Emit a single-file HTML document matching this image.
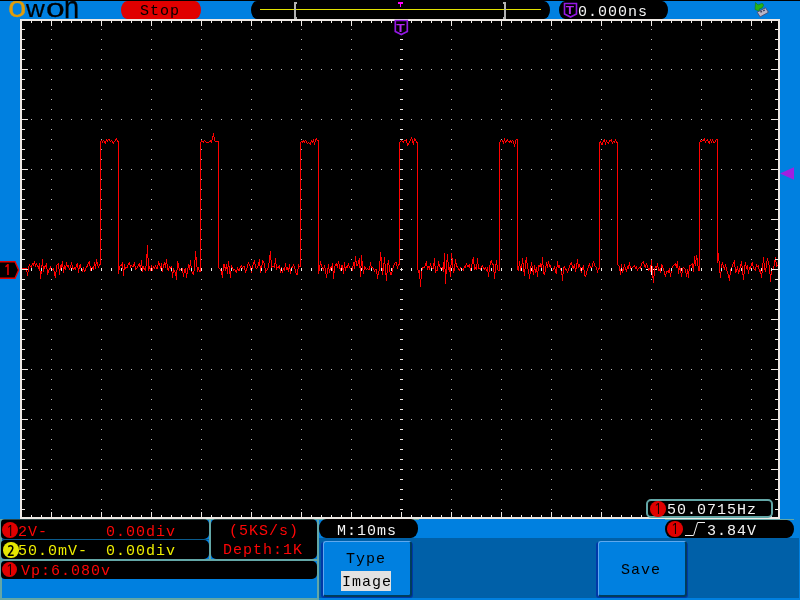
<!DOCTYPE html>
<html lang="en"><head><meta charset="utf-8"><title>OWON oscilloscope</title>
<style>
html,body{margin:0;padding:0}
body{width:800px;height:600px;overflow:hidden;background:#0080e0;position:relative;
 font-family:"Liberation Mono",monospace;font-size:15px;letter-spacing:1px;line-height:18px}
.a{position:absolute}
.blk{position:absolute;background:#000}
.t{position:absolute;white-space:pre;height:18px;will-change:transform}
.red{color:#ff0606} .yel{color:#eeee00} .wht{color:#f4f4f4}
.dot{position:absolute;width:16px;height:16px;border-radius:50%;color:#000;will-change:transform;
 font-family:"Liberation Sans","Noto Sans CJK SC",sans-serif;font-size:14px;letter-spacing:0;text-align:center;line-height:18px;text-indent:0.5px}
.dot b{font-family:"NanumGothic","Liberation Sans",sans-serif;font-weight:normal;font-size:14px}
.dot b.two{font-size:13px;font-weight:bold}
.btn{position:absolute;box-sizing:border-box;width:89px;height:56px;background:#0080e0;border-radius:3px;
 border-style:solid;border-width:1px 2px 2px 1px;border-color:#5ea8ee #003c5c #003c5c #5ea8ee;color:#000}
.nav{position:absolute;width:92px;height:56px;background:#0038a8;border-radius:3px}
</style></head><body>
<!-- top strip -->
<div class="blk" style="left:0;top:0;width:800px;height:1px"></div>
<div class="a" style="left:0;top:1px;height:18px;width:90px;font-family:'Liberation Sans',sans-serif;text-transform:lowercase;color:#000;font-size:30px;line-height:40px;letter-spacing:0;overflow:hidden;will-change:transform;-webkit-text-stroke:0.3px currentColor"><span style="position:absolute;left:7.7px;top:-12.7px;transform-origin:0 0;transform:scale(1.1,0.97);color:#e29c08">O</span><span style="position:absolute;left:25.9px;top:-8.3px;transform-origin:0 0;transform:scale(0.868,0.806)">W</span><span style="position:absolute;left:46.4px;top:-10.3px;transform-origin:0 0;transform:scale(1.12,0.881)">O</span><span style="position:absolute;left:63.98px;top:-13.58px;transform-origin:0 0;transform:scale(0.908,1.02)">N</span></div>
<div class="a" style="left:120.6px;top:1px;width:80px;height:18px;border-radius:6px/9px;background:#e00000"></div>
<div class="t" style="left:139.6px;top:3px;color:#000">Stop</div>
<div class="blk" style="left:250.6px;top:1px;width:299px;height:18px;border-radius:6px/9px"></div>
<div class="a" style="left:260px;top:9px;width:281px;height:1px;background:#e2e200"></div>
<svg class="a" style="left:290px;top:0" width="220" height="20" viewBox="290 0 220 20" shape-rendering="crispEdges">
 <path d="M294 2h3v2h-1v13h1v2h-3z" fill="#b2b2b2"/>
 <path d="M506 2h-3v2h1v13h-1v2h3z" fill="#b2b2b2"/>
 <path d="M398 2h5v2h-2v3h-1v-3h-2z" fill="#ff00ff"/>
</svg>
<div class="blk" style="left:559.4px;top:1px;width:108.6px;height:18px;border-radius:6px/9px"></div>
<svg class="a" style="left:563px;top:2px;will-change:transform" width="15" height="16" viewBox="0 0 15 16">
 <path d="M1.5 1.5H13.5V12L7.5 15L1.5 12Z" fill="#000" stroke="#9418e4" stroke-width="1.6"/>
 <text x="0" y="0" transform="translate(7.5 12.1) scale(1.28 1)" text-anchor="middle" font-family="Liberation Sans, sans-serif" font-weight="bold" font-size="10.6" fill="#b428f0">T</text>
</svg>
<div class="t wht" style="left:578.4px;top:4px">0.000ns</div>
<svg class="a" style="left:754px;top:1px" width="16" height="18" viewBox="0 0 16 18">
 <path d="M1.5 1.5L4 4L7.5 2.5Q9.5 2 9.5 4.5L8 7L5 8L6.5 10.5L1 8.5Z" fill="#28b414" stroke="#167a10" stroke-width="0.6"/>
 <path d="M3.2 11.2L11.6 6.8L14.4 11.3L6.1 15.9Z" fill="#b9b6c8" stroke="#4a4a70" stroke-width="0.9"/>
 <path d="M6 10.6L7.6 9.8L8.4 11L6.8 11.8ZM8.8 9.2L10.4 8.4L11.2 9.6L9.6 10.4Z" fill="#3c3c5a"/>
</svg>

<!-- graticule -->
<div class="a" style="left:20px;top:19px;width:760px;height:500px;background:#eee9e5"></div>
<div class="blk" style="left:22px;top:21px;width:756px;height:496px"></div>
<svg class="a" style="left:0;top:0" width="800" height="600" viewBox="0 0 800 600" shape-rendering="crispEdges">
<path d="M646 269h11v1h-11zM651 264h1v11h-1z" fill="#f4f4f4"/>
<path d="M22 268h1v1h-1zM23 268h1v1h-1zM24 268h1v1h-1zM25 268h1v1h-1zM26 268h1v4h-1zM27 272h1v4h-1zM28 266h1v6h-1zM29 264h1v2h-1zM30 266h1v1h-1zM31 265h1v3h-1zM32 263h1v2h-1zM33 263h1v3h-1zM34 261h1v3h-1zM35 264h1v3h-1zM36 263h1v2h-1zM37 265h1v2h-1zM38 266h1v3h-1zM39 263h1v8h-1zM40 271h1v8h-1zM41 265h1v9h-1zM42 259h1v7h-1zM43 266h1v6h-1zM44 266h1v3h-1zM45 265h1v2h-1zM46 263h1v6h-1zM47 269h1v6h-1zM48 270h1v3h-1zM49 268h1v2h-1zM50 266h1v3h-1zM51 269h1v2h-1zM52 269h1v1h-1zM53 268h1v3h-1zM54 271h1v5h-1zM55 272h1v6h-1zM56 265h1v7h-1zM57 264h1v1h-1zM58 263h1v6h-1zM59 269h1v6h-1zM60 265h1v5h-1zM61 264h1v4h-1zM62 261h1v6h-1zM63 267h1v6h-1zM64 265h1v4h-1zM65 266h1v4h-1zM66 262h1v4h-1zM67 265h1v2h-1zM68 265h1v3h-1zM69 268h1v2h-1zM70 265h1v3h-1zM71 262h1v3h-1zM72 265h1v4h-1zM73 268h1v2h-1zM74 267h1v2h-1zM75 267h1v3h-1zM76 264h1v3h-1zM77 263h1v5h-1zM78 268h1v5h-1zM79 265h1v4h-1zM80 264h1v4h-1zM81 268h1v3h-1zM82 269h1v3h-1zM83 267h1v3h-1zM84 270h1v2h-1zM85 268h1v3h-1zM86 266h1v2h-1zM87 264h1v3h-1zM88 262h1v2h-1zM89 261h1v5h-1zM90 266h1v5h-1zM91 269h1v2h-1zM92 267h1v2h-1zM93 266h1v4h-1zM94 262h1v4h-1zM95 264h1v5h-1zM96 259h1v5h-1zM97 262h1v4h-1zM98 266h1v2h-1zM99 264h1v2h-1zM100 141h1v124h-1zM101 139h1v2h-1zM102 141h1v2h-1zM103 140h1v1h-1zM104 141h1v2h-1zM105 141h1v3h-1zM106 139h1v2h-1zM107 140h1v2h-1zM108 139h1v1h-1zM109 139h1v2h-1zM110 141h1v1h-1zM111 140h1v1h-1zM112 141h1v2h-1zM113 142h1v2h-1zM114 141h1v1h-1zM115 139h1v2h-1zM116 138h1v2h-1zM117 140h1v2h-1zM118 141h1v133h-1zM119 266h1v4h-1zM120 265h1v1h-1zM121 264h1v2h-1zM122 262h1v7h-1zM123 269h1v7h-1zM124 264h1v6h-1zM125 267h1v2h-1zM126 267h1v1h-1zM127 265h1v3h-1zM128 263h1v2h-1zM129 262h1v3h-1zM130 265h1v3h-1zM131 265h1v1h-1zM132 266h1v1h-1zM133 264h1v3h-1zM134 262h1v4h-1zM135 266h1v4h-1zM136 268h1v1h-1zM137 266h1v2h-1zM138 264h1v2h-1zM139 263h1v4h-1zM140 265h1v5h-1zM141 260h1v6h-1zM142 266h1v6h-1zM143 266h1v3h-1zM144 268h1v2h-1zM145 266h1v5h-1zM146 254h1v12h-1zM147 245h1v13h-1zM148 258h1v13h-1zM149 266h1v3h-1zM150 268h1v3h-1zM151 265h1v3h-1zM152 268h1v3h-1zM153 266h1v2h-1zM154 267h1v2h-1zM155 265h1v2h-1zM156 267h1v2h-1zM157 265h1v4h-1zM158 261h1v4h-1zM159 263h1v3h-1zM160 266h1v3h-1zM161 263h1v5h-1zM162 268h1v4h-1zM163 264h1v4h-1zM164 262h1v3h-1zM165 263h1v5h-1zM166 259h1v5h-1zM167 264h1v6h-1zM168 268h1v3h-1zM169 266h1v2h-1zM170 267h1v2h-1zM171 266h1v6h-1zM172 272h1v6h-1zM173 268h1v5h-1zM174 270h1v2h-1zM175 272h1v4h-1zM176 270h1v10h-1zM177 261h1v9h-1zM178 263h1v5h-1zM179 268h1v3h-1zM180 269h1v1h-1zM181 269h1v2h-1zM182 268h1v5h-1zM183 273h1v4h-1zM184 269h1v4h-1zM185 268h1v5h-1zM186 273h1v5h-1zM187 268h1v6h-1zM188 264h1v4h-1zM189 265h1v5h-1zM190 260h1v6h-1zM191 266h1v6h-1zM192 272h1v2h-1zM193 271h1v4h-1zM194 260h1v11h-1zM195 251h1v9h-1zM196 257h1v10h-1zM197 267h1v5h-1zM198 267h1v3h-1zM199 270h1v2h-1zM200 142h1v130h-1zM201 140h1v2h-1zM202 141h1v1h-1zM203 141h1v2h-1zM204 140h1v1h-1zM205 141h1v1h-1zM206 142h1v1h-1zM207 142h1v1h-1zM208 142h1v1h-1zM209 141h1v1h-1zM210 140h1v2h-1zM211 140h1v3h-1zM212 136h1v4h-1zM213 133h1v4h-1zM214 137h1v4h-1zM215 141h1v1h-1zM216 141h1v1h-1zM217 141h1v1h-1zM218 141h1v127h-1zM219 268h1v1h-1zM220 269h1v2h-1zM221 271h1v4h-1zM222 271h1v7h-1zM223 264h1v7h-1zM224 264h1v4h-1zM225 267h1v4h-1zM226 264h1v5h-1zM227 267h1v7h-1zM228 261h1v6h-1zM229 266h1v8h-1zM230 271h1v7h-1zM231 265h1v6h-1zM232 267h1v2h-1zM233 269h1v2h-1zM234 269h1v1h-1zM235 270h1v2h-1zM236 270h1v3h-1zM237 267h1v3h-1zM238 269h1v2h-1zM239 268h1v3h-1zM240 266h1v2h-1zM241 265h1v2h-1zM242 267h1v2h-1zM243 266h1v1h-1zM244 266h1v4h-1zM245 270h1v3h-1zM246 268h1v3h-1zM247 264h1v4h-1zM248 262h1v2h-1zM249 264h1v2h-1zM250 266h1v4h-1zM251 269h1v4h-1zM252 265h1v4h-1zM253 262h1v3h-1zM254 260h1v4h-1zM255 264h1v4h-1zM256 268h1v1h-1zM257 266h1v2h-1zM258 262h1v4h-1zM259 259h1v7h-1zM260 266h1v7h-1zM261 265h1v6h-1zM262 260h1v5h-1zM263 261h1v2h-1zM264 263h1v5h-1zM265 268h1v5h-1zM266 270h1v1h-1zM267 268h1v2h-1zM268 263h1v5h-1zM269 255h1v8h-1zM270 251h1v9h-1zM271 260h1v9h-1zM272 266h1v1h-1zM273 266h1v1h-1zM274 263h1v5h-1zM275 258h1v6h-1zM276 264h1v6h-1zM277 267h1v1h-1zM278 266h1v2h-1zM279 265h1v4h-1zM280 269h1v4h-1zM281 267h1v3h-1zM282 270h1v3h-1zM283 268h1v2h-1zM284 267h1v4h-1zM285 263h1v4h-1zM286 267h1v3h-1zM287 267h1v3h-1zM288 268h1v4h-1zM289 264h1v5h-1zM290 269h1v5h-1zM291 267h1v3h-1zM292 266h1v2h-1zM293 264h1v2h-1zM294 266h1v3h-1zM295 269h1v4h-1zM296 273h1v2h-1zM297 269h1v6h-1zM298 264h1v5h-1zM299 266h1v1h-1zM300 142h1v125h-1zM301 141h1v1h-1zM302 141h1v2h-1zM303 140h1v2h-1zM304 141h1v2h-1zM305 140h1v1h-1zM306 141h1v2h-1zM307 143h1v1h-1zM308 142h1v1h-1zM309 143h1v1h-1zM310 142h1v3h-1zM311 140h1v2h-1zM312 141h1v2h-1zM313 139h1v3h-1zM314 142h1v3h-1zM315 139h1v3h-1zM316 138h1v2h-1zM317 140h1v1h-1zM318 140h1v134h-1zM319 265h1v6h-1zM320 261h1v4h-1zM321 264h1v3h-1zM322 267h1v2h-1zM323 268h1v3h-1zM324 265h1v3h-1zM325 268h1v6h-1zM326 274h1v4h-1zM327 268h1v6h-1zM328 264h1v5h-1zM329 269h1v4h-1zM330 267h1v3h-1zM331 266h1v4h-1zM332 263h1v8h-1zM333 271h1v8h-1zM334 266h1v7h-1zM335 264h1v2h-1zM336 263h1v3h-1zM337 264h1v4h-1zM338 261h1v3h-1zM339 264h1v5h-1zM340 268h1v3h-1zM341 265h1v3h-1zM342 265h1v5h-1zM343 268h1v6h-1zM344 262h1v6h-1zM345 267h1v4h-1zM346 266h1v2h-1zM347 265h1v3h-1zM348 263h1v3h-1zM349 266h1v2h-1zM350 268h1v1h-1zM351 269h1v1h-1zM352 266h1v5h-1zM353 262h1v4h-1zM354 262h1v7h-1zM355 256h1v6h-1zM356 261h1v5h-1zM357 264h1v2h-1zM358 260h1v4h-1zM359 258h1v10h-1zM360 266h1v11h-1zM361 255h1v11h-1zM362 261h1v9h-1zM363 270h1v4h-1zM364 266h1v4h-1zM365 267h1v2h-1zM366 269h1v1h-1zM367 268h1v1h-1zM368 269h1v1h-1zM369 266h1v4h-1zM370 262h1v4h-1zM371 266h1v3h-1zM372 267h1v1h-1zM373 268h1v2h-1zM374 270h1v2h-1zM375 269h1v1h-1zM376 269h1v5h-1zM377 274h1v5h-1zM378 271h1v4h-1zM379 261h1v10h-1zM380 252h1v9h-1zM381 257h1v11h-1zM382 268h1v7h-1zM383 263h1v8h-1zM384 257h1v7h-1zM385 264h1v11h-1zM386 273h1v8h-1zM387 263h1v10h-1zM388 260h1v5h-1zM389 265h1v7h-1zM390 272h1v3h-1zM391 272h1v3h-1zM392 268h1v4h-1zM393 265h1v3h-1zM394 263h1v2h-1zM395 262h1v1h-1zM396 262h1v4h-1zM397 266h1v3h-1zM398 264h1v2h-1zM399 142h1v123h-1zM400 141h1v1h-1zM401 140h1v1h-1zM402 141h1v1h-1zM403 141h1v2h-1zM404 140h1v1h-1zM405 140h1v1h-1zM406 139h1v4h-1zM407 143h1v3h-1zM408 143h1v2h-1zM409 141h1v2h-1zM410 139h1v2h-1zM411 137h1v2h-1zM412 139h1v4h-1zM413 141h1v4h-1zM414 138h1v3h-1zM415 139h1v2h-1zM416 141h1v2h-1zM417 142h1v128h-1zM418 270h1v3h-1zM419 270h1v9h-1zM420 279h1v8h-1zM421 270h1v9h-1zM422 267h1v3h-1zM423 267h1v1h-1zM424 266h1v2h-1zM425 263h1v3h-1zM426 261h1v5h-1zM427 266h1v4h-1zM428 266h1v2h-1zM429 266h1v4h-1zM430 263h1v3h-1zM431 266h1v3h-1zM432 268h1v1h-1zM433 263h1v6h-1zM434 258h1v8h-1zM435 266h1v7h-1zM436 270h1v1h-1zM437 266h1v5h-1zM438 261h1v5h-1zM439 264h1v3h-1zM440 267h1v2h-1zM441 269h1v2h-1zM442 267h1v3h-1zM443 262h1v10h-1zM444 253h1v16h-1zM445 269h1v15h-1zM446 260h1v14h-1zM447 254h1v8h-1zM448 262h1v8h-1zM449 267h1v5h-1zM450 265h1v12h-1zM451 253h1v12h-1zM452 258h1v10h-1zM453 268h1v5h-1zM454 264h1v7h-1zM455 259h1v5h-1zM456 263h1v4h-1zM457 266h1v2h-1zM458 268h1v2h-1zM459 269h1v2h-1zM460 267h1v2h-1zM461 268h1v1h-1zM462 269h1v1h-1zM463 268h1v3h-1zM464 266h1v2h-1zM465 265h1v3h-1zM466 263h1v2h-1zM467 265h1v2h-1zM468 265h1v2h-1zM469 264h1v4h-1zM470 268h1v3h-1zM471 264h1v4h-1zM472 259h1v5h-1zM473 257h1v7h-1zM474 264h1v6h-1zM475 267h1v2h-1zM476 264h1v6h-1zM477 258h1v6h-1zM478 264h1v5h-1zM479 268h1v1h-1zM480 268h1v2h-1zM481 266h1v2h-1zM482 265h1v2h-1zM483 267h1v2h-1zM484 268h1v2h-1zM485 267h1v2h-1zM486 269h1v2h-1zM487 267h1v5h-1zM488 272h1v5h-1zM489 265h1v7h-1zM490 261h1v4h-1zM491 260h1v3h-1zM492 263h1v2h-1zM493 264h1v8h-1zM494 272h1v7h-1zM495 264h1v9h-1zM496 260h1v5h-1zM497 265h1v5h-1zM498 270h1v1h-1zM499 142h1v129h-1zM500 140h1v2h-1zM501 139h1v1h-1zM502 140h1v2h-1zM503 141h1v3h-1zM504 138h1v3h-1zM505 141h1v2h-1zM506 140h1v2h-1zM507 139h1v2h-1zM508 141h1v1h-1zM509 141h1v2h-1zM510 140h1v2h-1zM511 141h1v2h-1zM512 140h1v1h-1zM513 141h1v3h-1zM514 144h1v3h-1zM515 140h1v4h-1zM516 139h1v1h-1zM517 139h1v131h-1zM518 266h1v5h-1zM519 261h1v5h-1zM520 266h1v5h-1zM521 264h1v6h-1zM522 258h1v6h-1zM523 263h1v9h-1zM524 269h1v7h-1zM525 260h1v9h-1zM526 257h1v6h-1zM527 263h1v6h-1zM528 269h1v5h-1zM529 274h1v5h-1zM530 266h1v8h-1zM531 262h1v4h-1zM532 266h1v6h-1zM533 270h1v5h-1zM534 265h1v5h-1zM535 269h1v4h-1zM536 267h1v5h-1zM537 271h1v6h-1zM538 265h1v6h-1zM539 265h1v2h-1zM540 263h1v4h-1zM541 264h1v7h-1zM542 257h1v8h-1zM543 265h1v9h-1zM544 272h1v3h-1zM545 266h1v6h-1zM546 262h1v4h-1zM547 264h1v4h-1zM548 261h1v3h-1zM549 264h1v3h-1zM550 265h1v3h-1zM551 268h1v3h-1zM552 270h1v1h-1zM553 268h1v2h-1zM554 266h1v3h-1zM555 269h1v4h-1zM556 267h1v7h-1zM557 261h1v6h-1zM558 265h1v3h-1zM559 265h1v3h-1zM560 268h1v2h-1zM561 269h1v6h-1zM562 274h1v7h-1zM563 267h1v7h-1zM564 266h1v2h-1zM565 268h1v2h-1zM566 269h1v2h-1zM567 271h1v2h-1zM568 268h1v3h-1zM569 265h1v3h-1zM570 263h1v2h-1zM571 262h1v3h-1zM572 265h1v3h-1zM573 266h1v3h-1zM574 264h1v4h-1zM575 268h1v4h-1zM576 263h1v6h-1zM577 259h1v5h-1zM578 264h1v4h-1zM579 264h1v3h-1zM580 267h1v4h-1zM581 270h1v3h-1zM582 267h1v3h-1zM583 265h1v5h-1zM584 270h1v6h-1zM585 275h1v2h-1zM586 271h1v4h-1zM587 268h1v3h-1zM588 265h1v3h-1zM589 263h1v3h-1zM590 266h1v2h-1zM591 267h1v2h-1zM592 263h1v4h-1zM593 261h1v2h-1zM594 263h1v3h-1zM595 266h1v1h-1zM596 267h1v3h-1zM597 270h1v3h-1zM598 268h1v2h-1zM599 142h1v127h-1zM600 141h1v2h-1zM601 143h1v2h-1zM602 142h1v3h-1zM603 140h1v2h-1zM604 139h1v3h-1zM605 142h1v3h-1zM606 140h1v2h-1zM607 142h1v1h-1zM608 142h1v2h-1zM609 140h1v2h-1zM610 140h1v1h-1zM611 139h1v3h-1zM612 142h1v2h-1zM613 141h1v1h-1zM614 141h1v2h-1zM615 139h1v2h-1zM616 141h1v2h-1zM617 142h1v123h-1zM618 265h1v1h-1zM619 266h1v5h-1zM620 269h1v6h-1zM621 264h1v5h-1zM622 269h1v4h-1zM623 267h1v4h-1zM624 264h1v3h-1zM625 267h1v3h-1zM626 269h1v3h-1zM627 266h1v3h-1zM628 265h1v4h-1zM629 262h1v4h-1zM630 266h1v3h-1zM631 268h1v1h-1zM632 267h1v1h-1zM633 266h1v1h-1zM634 265h1v2h-1zM635 267h1v2h-1zM636 266h1v3h-1zM637 269h1v2h-1zM638 268h1v1h-1zM639 267h1v1h-1zM640 266h1v3h-1zM641 263h1v3h-1zM642 262h1v1h-1zM643 261h1v3h-1zM644 264h1v3h-1zM645 265h1v3h-1zM646 263h1v2h-1zM647 265h1v3h-1zM648 268h1v3h-1zM649 268h1v2h-1zM650 265h1v7h-1zM651 259h1v7h-1zM652 266h1v12h-1zM653 276h1v7h-1zM654 268h1v8h-1zM655 266h1v2h-1zM656 266h1v3h-1zM657 263h1v4h-1zM658 267h1v4h-1zM659 269h1v2h-1zM660 268h1v5h-1zM661 264h1v4h-1zM662 265h1v3h-1zM663 268h1v3h-1zM664 271h1v4h-1zM665 274h1v3h-1zM666 271h1v3h-1zM667 271h1v1h-1zM668 270h1v3h-1zM669 268h1v5h-1zM670 273h1v4h-1zM671 268h1v5h-1zM672 266h1v2h-1zM673 265h1v1h-1zM674 264h1v1h-1zM675 263h1v3h-1zM676 264h1v4h-1zM677 261h1v7h-1zM678 268h1v6h-1zM679 266h1v4h-1zM680 268h1v5h-1zM681 273h1v4h-1zM682 268h1v5h-1zM683 267h1v1h-1zM684 268h1v1h-1zM685 269h1v4h-1zM686 273h1v4h-1zM687 269h1v5h-1zM688 271h1v7h-1zM689 265h1v6h-1zM690 265h1v1h-1zM691 264h1v1h-1zM692 263h1v5h-1zM693 264h1v8h-1zM694 256h1v8h-1zM695 260h1v6h-1zM696 255h1v5h-1zM697 258h1v8h-1zM698 266h1v5h-1zM699 142h1v129h-1zM700 140h1v2h-1zM701 141h1v1h-1zM702 140h1v1h-1zM703 139h1v2h-1zM704 138h1v3h-1zM705 141h1v2h-1zM706 140h1v1h-1zM707 139h1v2h-1zM708 141h1v2h-1zM709 141h1v3h-1zM710 139h1v2h-1zM711 141h1v2h-1zM712 139h1v2h-1zM713 141h1v2h-1zM714 142h1v1h-1zM715 140h1v2h-1zM716 139h1v1h-1zM717 139h1v124h-1zM718 253h1v8h-1zM719 261h1v12h-1zM720 272h1v6h-1zM721 264h1v8h-1zM722 262h1v3h-1zM723 265h1v3h-1zM724 267h1v3h-1zM725 264h1v3h-1zM726 267h1v4h-1zM727 271h1v3h-1zM728 274h1v4h-1zM729 275h1v6h-1zM730 269h1v6h-1zM731 267h1v2h-1zM732 264h1v3h-1zM733 262h1v2h-1zM734 260h1v7h-1zM735 267h1v6h-1zM736 269h1v3h-1zM737 266h1v4h-1zM738 270h1v4h-1zM739 268h1v4h-1zM740 264h1v4h-1zM741 261h1v5h-1zM742 266h1v9h-1zM743 274h1v6h-1zM744 265h1v9h-1zM745 262h1v4h-1zM746 266h1v3h-1zM747 265h1v5h-1zM748 270h1v4h-1zM749 267h1v3h-1zM750 266h1v3h-1zM751 263h1v3h-1zM752 262h1v4h-1zM753 266h1v3h-1zM754 269h1v1h-1zM755 267h1v4h-1zM756 264h1v3h-1zM757 266h1v1h-1zM758 265h1v4h-1zM759 269h1v3h-1zM760 270h1v4h-1zM761 273h1v5h-1zM762 263h1v10h-1zM763 257h1v6h-1zM764 263h1v7h-1zM765 268h1v4h-1zM766 261h1v7h-1zM767 258h1v3h-1zM768 261h1v4h-1zM769 265h1v9h-1zM770 274h1v8h-1zM771 269h1v6h-1zM772 269h1v1h-1zM773 266h1v3h-1zM774 260h1v6h-1zM775 257h1v5h-1zM776 262h1v5h-1zM777 265h1v1h-1z" fill="#ff0000"/>
<path d="M31 69h1v1h-1zM31 119h1v1h-1zM31 169h1v1h-1zM31 219h1v1h-1zM31 319h1v1h-1zM31 369h1v1h-1zM31 419h1v1h-1zM31 469h1v1h-1zM41 69h1v1h-1zM41 119h1v1h-1zM41 169h1v1h-1zM41 219h1v1h-1zM41 319h1v1h-1zM41 369h1v1h-1zM41 419h1v1h-1zM41 469h1v1h-1zM51 29h1v1h-1zM51 39h1v1h-1zM51 49h1v1h-1zM51 59h1v1h-1zM51 69h1v1h-1zM51 79h1v1h-1zM51 89h1v1h-1zM51 99h1v1h-1zM51 109h1v1h-1zM51 119h1v1h-1zM51 129h1v1h-1zM51 139h1v1h-1zM51 149h1v1h-1zM51 159h1v1h-1zM51 169h1v1h-1zM51 179h1v1h-1zM51 189h1v1h-1zM51 199h1v1h-1zM51 209h1v1h-1zM51 219h1v1h-1zM51 229h1v1h-1zM51 239h1v1h-1zM51 249h1v1h-1zM51 259h1v1h-1zM51 279h1v1h-1zM51 289h1v1h-1zM51 299h1v1h-1zM51 309h1v1h-1zM51 319h1v1h-1zM51 329h1v1h-1zM51 339h1v1h-1zM51 349h1v1h-1zM51 359h1v1h-1zM51 369h1v1h-1zM51 379h1v1h-1zM51 389h1v1h-1zM51 399h1v1h-1zM51 409h1v1h-1zM51 419h1v1h-1zM51 429h1v1h-1zM51 439h1v1h-1zM51 449h1v1h-1zM51 459h1v1h-1zM51 469h1v1h-1zM51 479h1v1h-1zM51 489h1v1h-1zM51 499h1v1h-1zM51 509h1v1h-1zM61 69h1v1h-1zM61 119h1v1h-1zM61 169h1v1h-1zM61 219h1v1h-1zM61 319h1v1h-1zM61 369h1v1h-1zM61 419h1v1h-1zM61 469h1v1h-1zM71 69h1v1h-1zM71 119h1v1h-1zM71 169h1v1h-1zM71 219h1v1h-1zM71 319h1v1h-1zM71 369h1v1h-1zM71 419h1v1h-1zM71 469h1v1h-1zM81 69h1v1h-1zM81 119h1v1h-1zM81 169h1v1h-1zM81 219h1v1h-1zM81 319h1v1h-1zM81 369h1v1h-1zM81 419h1v1h-1zM81 469h1v1h-1zM91 69h1v1h-1zM91 119h1v1h-1zM91 169h1v1h-1zM91 219h1v1h-1zM91 319h1v1h-1zM91 369h1v1h-1zM91 419h1v1h-1zM91 469h1v1h-1zM101 29h1v1h-1zM101 39h1v1h-1zM101 49h1v1h-1zM101 59h1v1h-1zM101 69h1v1h-1zM101 79h1v1h-1zM101 89h1v1h-1zM101 99h1v1h-1zM101 109h1v1h-1zM101 119h1v1h-1zM101 129h1v1h-1zM101 139h1v1h-1zM101 149h1v1h-1zM101 159h1v1h-1zM101 169h1v1h-1zM101 179h1v1h-1zM101 189h1v1h-1zM101 199h1v1h-1zM101 209h1v1h-1zM101 219h1v1h-1zM101 229h1v1h-1zM101 239h1v1h-1zM101 249h1v1h-1zM101 259h1v1h-1zM101 279h1v1h-1zM101 289h1v1h-1zM101 299h1v1h-1zM101 309h1v1h-1zM101 319h1v1h-1zM101 329h1v1h-1zM101 339h1v1h-1zM101 349h1v1h-1zM101 359h1v1h-1zM101 369h1v1h-1zM101 379h1v1h-1zM101 389h1v1h-1zM101 399h1v1h-1zM101 409h1v1h-1zM101 419h1v1h-1zM101 429h1v1h-1zM101 439h1v1h-1zM101 449h1v1h-1zM101 459h1v1h-1zM101 469h1v1h-1zM101 479h1v1h-1zM101 489h1v1h-1zM101 499h1v1h-1zM101 509h1v1h-1zM111 69h1v1h-1zM111 119h1v1h-1zM111 169h1v1h-1zM111 219h1v1h-1zM111 319h1v1h-1zM111 369h1v1h-1zM111 419h1v1h-1zM111 469h1v1h-1zM121 69h1v1h-1zM121 119h1v1h-1zM121 169h1v1h-1zM121 219h1v1h-1zM121 319h1v1h-1zM121 369h1v1h-1zM121 419h1v1h-1zM121 469h1v1h-1zM131 69h1v1h-1zM131 119h1v1h-1zM131 169h1v1h-1zM131 219h1v1h-1zM131 319h1v1h-1zM131 369h1v1h-1zM131 419h1v1h-1zM131 469h1v1h-1zM141 69h1v1h-1zM141 119h1v1h-1zM141 169h1v1h-1zM141 219h1v1h-1zM141 319h1v1h-1zM141 369h1v1h-1zM141 419h1v1h-1zM141 469h1v1h-1zM151 29h1v1h-1zM151 39h1v1h-1zM151 49h1v1h-1zM151 59h1v1h-1zM151 69h1v1h-1zM151 79h1v1h-1zM151 89h1v1h-1zM151 99h1v1h-1zM151 109h1v1h-1zM151 119h1v1h-1zM151 129h1v1h-1zM151 139h1v1h-1zM151 149h1v1h-1zM151 159h1v1h-1zM151 169h1v1h-1zM151 179h1v1h-1zM151 189h1v1h-1zM151 199h1v1h-1zM151 209h1v1h-1zM151 219h1v1h-1zM151 229h1v1h-1zM151 239h1v1h-1zM151 249h1v1h-1zM151 259h1v1h-1zM151 279h1v1h-1zM151 289h1v1h-1zM151 299h1v1h-1zM151 309h1v1h-1zM151 319h1v1h-1zM151 329h1v1h-1zM151 339h1v1h-1zM151 349h1v1h-1zM151 359h1v1h-1zM151 369h1v1h-1zM151 379h1v1h-1zM151 389h1v1h-1zM151 399h1v1h-1zM151 409h1v1h-1zM151 419h1v1h-1zM151 429h1v1h-1zM151 439h1v1h-1zM151 449h1v1h-1zM151 459h1v1h-1zM151 469h1v1h-1zM151 479h1v1h-1zM151 489h1v1h-1zM151 499h1v1h-1zM151 509h1v1h-1zM161 69h1v1h-1zM161 119h1v1h-1zM161 169h1v1h-1zM161 219h1v1h-1zM161 319h1v1h-1zM161 369h1v1h-1zM161 419h1v1h-1zM161 469h1v1h-1zM171 69h1v1h-1zM171 119h1v1h-1zM171 169h1v1h-1zM171 219h1v1h-1zM171 319h1v1h-1zM171 369h1v1h-1zM171 419h1v1h-1zM171 469h1v1h-1zM181 69h1v1h-1zM181 119h1v1h-1zM181 169h1v1h-1zM181 219h1v1h-1zM181 319h1v1h-1zM181 369h1v1h-1zM181 419h1v1h-1zM181 469h1v1h-1zM191 69h1v1h-1zM191 119h1v1h-1zM191 169h1v1h-1zM191 219h1v1h-1zM191 319h1v1h-1zM191 369h1v1h-1zM191 419h1v1h-1zM191 469h1v1h-1zM201 29h1v1h-1zM201 39h1v1h-1zM201 49h1v1h-1zM201 59h1v1h-1zM201 69h1v1h-1zM201 79h1v1h-1zM201 89h1v1h-1zM201 99h1v1h-1zM201 109h1v1h-1zM201 119h1v1h-1zM201 129h1v1h-1zM201 139h1v1h-1zM201 149h1v1h-1zM201 159h1v1h-1zM201 169h1v1h-1zM201 179h1v1h-1zM201 189h1v1h-1zM201 199h1v1h-1zM201 209h1v1h-1zM201 219h1v1h-1zM201 229h1v1h-1zM201 239h1v1h-1zM201 249h1v1h-1zM201 259h1v1h-1zM201 279h1v1h-1zM201 289h1v1h-1zM201 299h1v1h-1zM201 309h1v1h-1zM201 319h1v1h-1zM201 329h1v1h-1zM201 339h1v1h-1zM201 349h1v1h-1zM201 359h1v1h-1zM201 369h1v1h-1zM201 379h1v1h-1zM201 389h1v1h-1zM201 399h1v1h-1zM201 409h1v1h-1zM201 419h1v1h-1zM201 429h1v1h-1zM201 439h1v1h-1zM201 449h1v1h-1zM201 459h1v1h-1zM201 469h1v1h-1zM201 479h1v1h-1zM201 489h1v1h-1zM201 499h1v1h-1zM201 509h1v1h-1zM211 69h1v1h-1zM211 119h1v1h-1zM211 169h1v1h-1zM211 219h1v1h-1zM211 319h1v1h-1zM211 369h1v1h-1zM211 419h1v1h-1zM211 469h1v1h-1zM221 69h1v1h-1zM221 119h1v1h-1zM221 169h1v1h-1zM221 219h1v1h-1zM221 319h1v1h-1zM221 369h1v1h-1zM221 419h1v1h-1zM221 469h1v1h-1zM231 69h1v1h-1zM231 119h1v1h-1zM231 169h1v1h-1zM231 219h1v1h-1zM231 319h1v1h-1zM231 369h1v1h-1zM231 419h1v1h-1zM231 469h1v1h-1zM241 69h1v1h-1zM241 119h1v1h-1zM241 169h1v1h-1zM241 219h1v1h-1zM241 319h1v1h-1zM241 369h1v1h-1zM241 419h1v1h-1zM241 469h1v1h-1zM251 29h1v1h-1zM251 39h1v1h-1zM251 49h1v1h-1zM251 59h1v1h-1zM251 69h1v1h-1zM251 79h1v1h-1zM251 89h1v1h-1zM251 99h1v1h-1zM251 109h1v1h-1zM251 119h1v1h-1zM251 129h1v1h-1zM251 139h1v1h-1zM251 149h1v1h-1zM251 159h1v1h-1zM251 169h1v1h-1zM251 179h1v1h-1zM251 189h1v1h-1zM251 199h1v1h-1zM251 209h1v1h-1zM251 219h1v1h-1zM251 229h1v1h-1zM251 239h1v1h-1zM251 249h1v1h-1zM251 259h1v1h-1zM251 279h1v1h-1zM251 289h1v1h-1zM251 299h1v1h-1zM251 309h1v1h-1zM251 319h1v1h-1zM251 329h1v1h-1zM251 339h1v1h-1zM251 349h1v1h-1zM251 359h1v1h-1zM251 369h1v1h-1zM251 379h1v1h-1zM251 389h1v1h-1zM251 399h1v1h-1zM251 409h1v1h-1zM251 419h1v1h-1zM251 429h1v1h-1zM251 439h1v1h-1zM251 449h1v1h-1zM251 459h1v1h-1zM251 469h1v1h-1zM251 479h1v1h-1zM251 489h1v1h-1zM251 499h1v1h-1zM251 509h1v1h-1zM261 69h1v1h-1zM261 119h1v1h-1zM261 169h1v1h-1zM261 219h1v1h-1zM261 319h1v1h-1zM261 369h1v1h-1zM261 419h1v1h-1zM261 469h1v1h-1zM271 69h1v1h-1zM271 119h1v1h-1zM271 169h1v1h-1zM271 219h1v1h-1zM271 319h1v1h-1zM271 369h1v1h-1zM271 419h1v1h-1zM271 469h1v1h-1zM281 69h1v1h-1zM281 119h1v1h-1zM281 169h1v1h-1zM281 219h1v1h-1zM281 319h1v1h-1zM281 369h1v1h-1zM281 419h1v1h-1zM281 469h1v1h-1zM291 69h1v1h-1zM291 119h1v1h-1zM291 169h1v1h-1zM291 219h1v1h-1zM291 319h1v1h-1zM291 369h1v1h-1zM291 419h1v1h-1zM291 469h1v1h-1zM301 29h1v1h-1zM301 39h1v1h-1zM301 49h1v1h-1zM301 59h1v1h-1zM301 69h1v1h-1zM301 79h1v1h-1zM301 89h1v1h-1zM301 99h1v1h-1zM301 109h1v1h-1zM301 119h1v1h-1zM301 129h1v1h-1zM301 139h1v1h-1zM301 149h1v1h-1zM301 159h1v1h-1zM301 169h1v1h-1zM301 179h1v1h-1zM301 189h1v1h-1zM301 199h1v1h-1zM301 209h1v1h-1zM301 219h1v1h-1zM301 229h1v1h-1zM301 239h1v1h-1zM301 249h1v1h-1zM301 259h1v1h-1zM301 279h1v1h-1zM301 289h1v1h-1zM301 299h1v1h-1zM301 309h1v1h-1zM301 319h1v1h-1zM301 329h1v1h-1zM301 339h1v1h-1zM301 349h1v1h-1zM301 359h1v1h-1zM301 369h1v1h-1zM301 379h1v1h-1zM301 389h1v1h-1zM301 399h1v1h-1zM301 409h1v1h-1zM301 419h1v1h-1zM301 429h1v1h-1zM301 439h1v1h-1zM301 449h1v1h-1zM301 459h1v1h-1zM301 469h1v1h-1zM301 479h1v1h-1zM301 489h1v1h-1zM301 499h1v1h-1zM301 509h1v1h-1zM311 69h1v1h-1zM311 119h1v1h-1zM311 169h1v1h-1zM311 219h1v1h-1zM311 319h1v1h-1zM311 369h1v1h-1zM311 419h1v1h-1zM311 469h1v1h-1zM321 69h1v1h-1zM321 119h1v1h-1zM321 169h1v1h-1zM321 219h1v1h-1zM321 319h1v1h-1zM321 369h1v1h-1zM321 419h1v1h-1zM321 469h1v1h-1zM331 69h1v1h-1zM331 119h1v1h-1zM331 169h1v1h-1zM331 219h1v1h-1zM331 319h1v1h-1zM331 369h1v1h-1zM331 419h1v1h-1zM331 469h1v1h-1zM341 69h1v1h-1zM341 119h1v1h-1zM341 169h1v1h-1zM341 219h1v1h-1zM341 319h1v1h-1zM341 369h1v1h-1zM341 419h1v1h-1zM341 469h1v1h-1zM351 29h1v1h-1zM351 39h1v1h-1zM351 49h1v1h-1zM351 59h1v1h-1zM351 69h1v1h-1zM351 79h1v1h-1zM351 89h1v1h-1zM351 99h1v1h-1zM351 109h1v1h-1zM351 119h1v1h-1zM351 129h1v1h-1zM351 139h1v1h-1zM351 149h1v1h-1zM351 159h1v1h-1zM351 169h1v1h-1zM351 179h1v1h-1zM351 189h1v1h-1zM351 199h1v1h-1zM351 209h1v1h-1zM351 219h1v1h-1zM351 229h1v1h-1zM351 239h1v1h-1zM351 249h1v1h-1zM351 259h1v1h-1zM351 279h1v1h-1zM351 289h1v1h-1zM351 299h1v1h-1zM351 309h1v1h-1zM351 319h1v1h-1zM351 329h1v1h-1zM351 339h1v1h-1zM351 349h1v1h-1zM351 359h1v1h-1zM351 369h1v1h-1zM351 379h1v1h-1zM351 389h1v1h-1zM351 399h1v1h-1zM351 409h1v1h-1zM351 419h1v1h-1zM351 429h1v1h-1zM351 439h1v1h-1zM351 449h1v1h-1zM351 459h1v1h-1zM351 469h1v1h-1zM351 479h1v1h-1zM351 489h1v1h-1zM351 499h1v1h-1zM351 509h1v1h-1zM361 69h1v1h-1zM361 119h1v1h-1zM361 169h1v1h-1zM361 219h1v1h-1zM361 319h1v1h-1zM361 369h1v1h-1zM361 419h1v1h-1zM361 469h1v1h-1zM371 69h1v1h-1zM371 119h1v1h-1zM371 169h1v1h-1zM371 219h1v1h-1zM371 319h1v1h-1zM371 369h1v1h-1zM371 419h1v1h-1zM371 469h1v1h-1zM381 69h1v1h-1zM381 119h1v1h-1zM381 169h1v1h-1zM381 219h1v1h-1zM381 319h1v1h-1zM381 369h1v1h-1zM381 419h1v1h-1zM381 469h1v1h-1zM391 69h1v1h-1zM391 119h1v1h-1zM391 169h1v1h-1zM391 219h1v1h-1zM391 319h1v1h-1zM391 369h1v1h-1zM391 419h1v1h-1zM391 469h1v1h-1zM411 69h1v1h-1zM411 119h1v1h-1zM411 169h1v1h-1zM411 219h1v1h-1zM411 319h1v1h-1zM411 369h1v1h-1zM411 419h1v1h-1zM411 469h1v1h-1zM421 69h1v1h-1zM421 119h1v1h-1zM421 169h1v1h-1zM421 219h1v1h-1zM421 319h1v1h-1zM421 369h1v1h-1zM421 419h1v1h-1zM421 469h1v1h-1zM431 69h1v1h-1zM431 119h1v1h-1zM431 169h1v1h-1zM431 219h1v1h-1zM431 319h1v1h-1zM431 369h1v1h-1zM431 419h1v1h-1zM431 469h1v1h-1zM441 69h1v1h-1zM441 119h1v1h-1zM441 169h1v1h-1zM441 219h1v1h-1zM441 319h1v1h-1zM441 369h1v1h-1zM441 419h1v1h-1zM441 469h1v1h-1zM451 29h1v1h-1zM451 39h1v1h-1zM451 49h1v1h-1zM451 59h1v1h-1zM451 69h1v1h-1zM451 79h1v1h-1zM451 89h1v1h-1zM451 99h1v1h-1zM451 109h1v1h-1zM451 119h1v1h-1zM451 129h1v1h-1zM451 139h1v1h-1zM451 149h1v1h-1zM451 159h1v1h-1zM451 169h1v1h-1zM451 179h1v1h-1zM451 189h1v1h-1zM451 199h1v1h-1zM451 209h1v1h-1zM451 219h1v1h-1zM451 229h1v1h-1zM451 239h1v1h-1zM451 249h1v1h-1zM451 259h1v1h-1zM451 279h1v1h-1zM451 289h1v1h-1zM451 299h1v1h-1zM451 309h1v1h-1zM451 319h1v1h-1zM451 329h1v1h-1zM451 339h1v1h-1zM451 349h1v1h-1zM451 359h1v1h-1zM451 369h1v1h-1zM451 379h1v1h-1zM451 389h1v1h-1zM451 399h1v1h-1zM451 409h1v1h-1zM451 419h1v1h-1zM451 429h1v1h-1zM451 439h1v1h-1zM451 449h1v1h-1zM451 459h1v1h-1zM451 469h1v1h-1zM451 479h1v1h-1zM451 489h1v1h-1zM451 499h1v1h-1zM451 509h1v1h-1zM461 69h1v1h-1zM461 119h1v1h-1zM461 169h1v1h-1zM461 219h1v1h-1zM461 319h1v1h-1zM461 369h1v1h-1zM461 419h1v1h-1zM461 469h1v1h-1zM471 69h1v1h-1zM471 119h1v1h-1zM471 169h1v1h-1zM471 219h1v1h-1zM471 319h1v1h-1zM471 369h1v1h-1zM471 419h1v1h-1zM471 469h1v1h-1zM481 69h1v1h-1zM481 119h1v1h-1zM481 169h1v1h-1zM481 219h1v1h-1zM481 319h1v1h-1zM481 369h1v1h-1zM481 419h1v1h-1zM481 469h1v1h-1zM491 69h1v1h-1zM491 119h1v1h-1zM491 169h1v1h-1zM491 219h1v1h-1zM491 319h1v1h-1zM491 369h1v1h-1zM491 419h1v1h-1zM491 469h1v1h-1zM501 29h1v1h-1zM501 39h1v1h-1zM501 49h1v1h-1zM501 59h1v1h-1zM501 69h1v1h-1zM501 79h1v1h-1zM501 89h1v1h-1zM501 99h1v1h-1zM501 109h1v1h-1zM501 119h1v1h-1zM501 129h1v1h-1zM501 139h1v1h-1zM501 149h1v1h-1zM501 159h1v1h-1zM501 169h1v1h-1zM501 179h1v1h-1zM501 189h1v1h-1zM501 199h1v1h-1zM501 209h1v1h-1zM501 219h1v1h-1zM501 229h1v1h-1zM501 239h1v1h-1zM501 249h1v1h-1zM501 259h1v1h-1zM501 279h1v1h-1zM501 289h1v1h-1zM501 299h1v1h-1zM501 309h1v1h-1zM501 319h1v1h-1zM501 329h1v1h-1zM501 339h1v1h-1zM501 349h1v1h-1zM501 359h1v1h-1zM501 369h1v1h-1zM501 379h1v1h-1zM501 389h1v1h-1zM501 399h1v1h-1zM501 409h1v1h-1zM501 419h1v1h-1zM501 429h1v1h-1zM501 439h1v1h-1zM501 449h1v1h-1zM501 459h1v1h-1zM501 469h1v1h-1zM501 479h1v1h-1zM501 489h1v1h-1zM501 499h1v1h-1zM501 509h1v1h-1zM511 69h1v1h-1zM511 119h1v1h-1zM511 169h1v1h-1zM511 219h1v1h-1zM511 319h1v1h-1zM511 369h1v1h-1zM511 419h1v1h-1zM511 469h1v1h-1zM521 69h1v1h-1zM521 119h1v1h-1zM521 169h1v1h-1zM521 219h1v1h-1zM521 319h1v1h-1zM521 369h1v1h-1zM521 419h1v1h-1zM521 469h1v1h-1zM531 69h1v1h-1zM531 119h1v1h-1zM531 169h1v1h-1zM531 219h1v1h-1zM531 319h1v1h-1zM531 369h1v1h-1zM531 419h1v1h-1zM531 469h1v1h-1zM541 69h1v1h-1zM541 119h1v1h-1zM541 169h1v1h-1zM541 219h1v1h-1zM541 319h1v1h-1zM541 369h1v1h-1zM541 419h1v1h-1zM541 469h1v1h-1zM551 29h1v1h-1zM551 39h1v1h-1zM551 49h1v1h-1zM551 59h1v1h-1zM551 69h1v1h-1zM551 79h1v1h-1zM551 89h1v1h-1zM551 99h1v1h-1zM551 109h1v1h-1zM551 119h1v1h-1zM551 129h1v1h-1zM551 139h1v1h-1zM551 149h1v1h-1zM551 159h1v1h-1zM551 169h1v1h-1zM551 179h1v1h-1zM551 189h1v1h-1zM551 199h1v1h-1zM551 209h1v1h-1zM551 219h1v1h-1zM551 229h1v1h-1zM551 239h1v1h-1zM551 249h1v1h-1zM551 259h1v1h-1zM551 279h1v1h-1zM551 289h1v1h-1zM551 299h1v1h-1zM551 309h1v1h-1zM551 319h1v1h-1zM551 329h1v1h-1zM551 339h1v1h-1zM551 349h1v1h-1zM551 359h1v1h-1zM551 369h1v1h-1zM551 379h1v1h-1zM551 389h1v1h-1zM551 399h1v1h-1zM551 409h1v1h-1zM551 419h1v1h-1zM551 429h1v1h-1zM551 439h1v1h-1zM551 449h1v1h-1zM551 459h1v1h-1zM551 469h1v1h-1zM551 479h1v1h-1zM551 489h1v1h-1zM551 499h1v1h-1zM551 509h1v1h-1zM561 69h1v1h-1zM561 119h1v1h-1zM561 169h1v1h-1zM561 219h1v1h-1zM561 319h1v1h-1zM561 369h1v1h-1zM561 419h1v1h-1zM561 469h1v1h-1zM571 69h1v1h-1zM571 119h1v1h-1zM571 169h1v1h-1zM571 219h1v1h-1zM571 319h1v1h-1zM571 369h1v1h-1zM571 419h1v1h-1zM571 469h1v1h-1zM581 69h1v1h-1zM581 119h1v1h-1zM581 169h1v1h-1zM581 219h1v1h-1zM581 319h1v1h-1zM581 369h1v1h-1zM581 419h1v1h-1zM581 469h1v1h-1zM591 69h1v1h-1zM591 119h1v1h-1zM591 169h1v1h-1zM591 219h1v1h-1zM591 319h1v1h-1zM591 369h1v1h-1zM591 419h1v1h-1zM591 469h1v1h-1zM601 29h1v1h-1zM601 39h1v1h-1zM601 49h1v1h-1zM601 59h1v1h-1zM601 69h1v1h-1zM601 79h1v1h-1zM601 89h1v1h-1zM601 99h1v1h-1zM601 109h1v1h-1zM601 119h1v1h-1zM601 129h1v1h-1zM601 139h1v1h-1zM601 149h1v1h-1zM601 159h1v1h-1zM601 169h1v1h-1zM601 179h1v1h-1zM601 189h1v1h-1zM601 199h1v1h-1zM601 209h1v1h-1zM601 219h1v1h-1zM601 229h1v1h-1zM601 239h1v1h-1zM601 249h1v1h-1zM601 259h1v1h-1zM601 279h1v1h-1zM601 289h1v1h-1zM601 299h1v1h-1zM601 309h1v1h-1zM601 319h1v1h-1zM601 329h1v1h-1zM601 339h1v1h-1zM601 349h1v1h-1zM601 359h1v1h-1zM601 369h1v1h-1zM601 379h1v1h-1zM601 389h1v1h-1zM601 399h1v1h-1zM601 409h1v1h-1zM601 419h1v1h-1zM601 429h1v1h-1zM601 439h1v1h-1zM601 449h1v1h-1zM601 459h1v1h-1zM601 469h1v1h-1zM601 479h1v1h-1zM601 489h1v1h-1zM601 499h1v1h-1zM601 509h1v1h-1zM611 69h1v1h-1zM611 119h1v1h-1zM611 169h1v1h-1zM611 219h1v1h-1zM611 319h1v1h-1zM611 369h1v1h-1zM611 419h1v1h-1zM611 469h1v1h-1zM621 69h1v1h-1zM621 119h1v1h-1zM621 169h1v1h-1zM621 219h1v1h-1zM621 319h1v1h-1zM621 369h1v1h-1zM621 419h1v1h-1zM621 469h1v1h-1zM631 69h1v1h-1zM631 119h1v1h-1zM631 169h1v1h-1zM631 219h1v1h-1zM631 319h1v1h-1zM631 369h1v1h-1zM631 419h1v1h-1zM631 469h1v1h-1zM641 69h1v1h-1zM641 119h1v1h-1zM641 169h1v1h-1zM641 219h1v1h-1zM641 319h1v1h-1zM641 369h1v1h-1zM641 419h1v1h-1zM641 469h1v1h-1zM651 29h1v1h-1zM651 39h1v1h-1zM651 49h1v1h-1zM651 59h1v1h-1zM651 69h1v1h-1zM651 79h1v1h-1zM651 89h1v1h-1zM651 99h1v1h-1zM651 109h1v1h-1zM651 119h1v1h-1zM651 129h1v1h-1zM651 139h1v1h-1zM651 149h1v1h-1zM651 159h1v1h-1zM651 169h1v1h-1zM651 179h1v1h-1zM651 189h1v1h-1zM651 199h1v1h-1zM651 209h1v1h-1zM651 219h1v1h-1zM651 229h1v1h-1zM651 239h1v1h-1zM651 249h1v1h-1zM651 259h1v1h-1zM651 279h1v1h-1zM651 289h1v1h-1zM651 299h1v1h-1zM651 309h1v1h-1zM651 319h1v1h-1zM651 329h1v1h-1zM651 339h1v1h-1zM651 349h1v1h-1zM651 359h1v1h-1zM651 369h1v1h-1zM651 379h1v1h-1zM651 389h1v1h-1zM651 399h1v1h-1zM651 409h1v1h-1zM651 419h1v1h-1zM651 429h1v1h-1zM651 439h1v1h-1zM651 449h1v1h-1zM651 459h1v1h-1zM651 469h1v1h-1zM651 479h1v1h-1zM651 489h1v1h-1zM651 499h1v1h-1zM651 509h1v1h-1zM661 69h1v1h-1zM661 119h1v1h-1zM661 169h1v1h-1zM661 219h1v1h-1zM661 319h1v1h-1zM661 369h1v1h-1zM661 419h1v1h-1zM661 469h1v1h-1zM671 69h1v1h-1zM671 119h1v1h-1zM671 169h1v1h-1zM671 219h1v1h-1zM671 319h1v1h-1zM671 369h1v1h-1zM671 419h1v1h-1zM671 469h1v1h-1zM681 69h1v1h-1zM681 119h1v1h-1zM681 169h1v1h-1zM681 219h1v1h-1zM681 319h1v1h-1zM681 369h1v1h-1zM681 419h1v1h-1zM681 469h1v1h-1zM691 69h1v1h-1zM691 119h1v1h-1zM691 169h1v1h-1zM691 219h1v1h-1zM691 319h1v1h-1zM691 369h1v1h-1zM691 419h1v1h-1zM691 469h1v1h-1zM701 29h1v1h-1zM701 39h1v1h-1zM701 49h1v1h-1zM701 59h1v1h-1zM701 69h1v1h-1zM701 79h1v1h-1zM701 89h1v1h-1zM701 99h1v1h-1zM701 109h1v1h-1zM701 119h1v1h-1zM701 129h1v1h-1zM701 139h1v1h-1zM701 149h1v1h-1zM701 159h1v1h-1zM701 169h1v1h-1zM701 179h1v1h-1zM701 189h1v1h-1zM701 199h1v1h-1zM701 209h1v1h-1zM701 219h1v1h-1zM701 229h1v1h-1zM701 239h1v1h-1zM701 249h1v1h-1zM701 259h1v1h-1zM701 279h1v1h-1zM701 289h1v1h-1zM701 299h1v1h-1zM701 309h1v1h-1zM701 319h1v1h-1zM701 329h1v1h-1zM701 339h1v1h-1zM701 349h1v1h-1zM701 359h1v1h-1zM701 369h1v1h-1zM701 379h1v1h-1zM701 389h1v1h-1zM701 399h1v1h-1zM701 409h1v1h-1zM701 419h1v1h-1zM701 429h1v1h-1zM701 439h1v1h-1zM701 449h1v1h-1zM701 459h1v1h-1zM701 469h1v1h-1zM701 479h1v1h-1zM701 489h1v1h-1zM701 499h1v1h-1zM701 509h1v1h-1zM711 69h1v1h-1zM711 119h1v1h-1zM711 169h1v1h-1zM711 219h1v1h-1zM711 319h1v1h-1zM711 369h1v1h-1zM711 419h1v1h-1zM711 469h1v1h-1zM721 69h1v1h-1zM721 119h1v1h-1zM721 169h1v1h-1zM721 219h1v1h-1zM721 319h1v1h-1zM721 369h1v1h-1zM721 419h1v1h-1zM721 469h1v1h-1zM731 69h1v1h-1zM731 119h1v1h-1zM731 169h1v1h-1zM731 219h1v1h-1zM731 319h1v1h-1zM731 369h1v1h-1zM731 419h1v1h-1zM731 469h1v1h-1zM741 69h1v1h-1zM741 119h1v1h-1zM741 169h1v1h-1zM741 219h1v1h-1zM741 319h1v1h-1zM741 369h1v1h-1zM741 419h1v1h-1zM741 469h1v1h-1zM751 29h1v1h-1zM751 39h1v1h-1zM751 49h1v1h-1zM751 59h1v1h-1zM751 69h1v1h-1zM751 79h1v1h-1zM751 89h1v1h-1zM751 99h1v1h-1zM751 109h1v1h-1zM751 119h1v1h-1zM751 129h1v1h-1zM751 139h1v1h-1zM751 149h1v1h-1zM751 159h1v1h-1zM751 169h1v1h-1zM751 179h1v1h-1zM751 189h1v1h-1zM751 199h1v1h-1zM751 209h1v1h-1zM751 219h1v1h-1zM751 229h1v1h-1zM751 239h1v1h-1zM751 249h1v1h-1zM751 259h1v1h-1zM751 279h1v1h-1zM751 289h1v1h-1zM751 299h1v1h-1zM751 309h1v1h-1zM751 319h1v1h-1zM751 329h1v1h-1zM751 339h1v1h-1zM751 349h1v1h-1zM751 359h1v1h-1zM751 369h1v1h-1zM751 379h1v1h-1zM751 389h1v1h-1zM751 399h1v1h-1zM751 409h1v1h-1zM751 419h1v1h-1zM751 429h1v1h-1zM751 439h1v1h-1zM751 449h1v1h-1zM751 459h1v1h-1zM751 469h1v1h-1zM751 479h1v1h-1zM751 489h1v1h-1zM751 499h1v1h-1zM751 509h1v1h-1zM761 69h1v1h-1zM761 119h1v1h-1zM761 169h1v1h-1zM761 219h1v1h-1zM761 319h1v1h-1zM761 369h1v1h-1zM761 419h1v1h-1zM761 469h1v1h-1zM771 69h1v1h-1zM771 119h1v1h-1zM771 169h1v1h-1zM771 219h1v1h-1zM771 319h1v1h-1zM771 369h1v1h-1zM771 419h1v1h-1zM771 469h1v1h-1z" fill="#b4b4b4"/>
<path d="M400 29h3v1h-3zM400 39h3v1h-3zM400 49h3v1h-3zM400 59h3v1h-3zM400 69h3v1h-3zM400 79h3v1h-3zM400 89h3v1h-3zM400 99h3v1h-3zM400 109h3v1h-3zM400 119h3v1h-3zM400 129h3v1h-3zM400 139h3v1h-3zM400 149h3v1h-3zM400 159h3v1h-3zM400 169h3v1h-3zM400 179h3v1h-3zM400 189h3v1h-3zM400 199h3v1h-3zM400 209h3v1h-3zM400 219h3v1h-3zM400 229h3v1h-3zM400 239h3v1h-3zM400 249h3v1h-3zM400 259h3v1h-3zM400 269h3v1h-3zM400 279h3v1h-3zM400 289h3v1h-3zM400 299h3v1h-3zM400 309h3v1h-3zM400 319h3v1h-3zM400 329h3v1h-3zM400 339h3v1h-3zM400 349h3v1h-3zM400 359h3v1h-3zM400 369h3v1h-3zM400 379h3v1h-3zM400 389h3v1h-3zM400 399h3v1h-3zM400 409h3v1h-3zM400 419h3v1h-3zM400 429h3v1h-3zM400 439h3v1h-3zM400 449h3v1h-3zM400 459h3v1h-3zM400 469h3v1h-3zM400 479h3v1h-3zM400 489h3v1h-3zM400 499h3v1h-3zM400 509h3v1h-3zM31 268h1v3h-1zM41 268h1v3h-1zM51 268h1v3h-1zM61 268h1v3h-1zM71 268h1v3h-1zM81 268h1v3h-1zM91 268h1v3h-1zM101 268h1v3h-1zM111 268h1v3h-1zM121 268h1v3h-1zM131 268h1v3h-1zM141 268h1v3h-1zM151 268h1v3h-1zM161 268h1v3h-1zM171 268h1v3h-1zM181 268h1v3h-1zM191 268h1v3h-1zM201 268h1v3h-1zM211 268h1v3h-1zM221 268h1v3h-1zM231 268h1v3h-1zM241 268h1v3h-1zM251 268h1v3h-1zM261 268h1v3h-1zM271 268h1v3h-1zM281 268h1v3h-1zM291 268h1v3h-1zM301 268h1v3h-1zM311 268h1v3h-1zM321 268h1v3h-1zM331 268h1v3h-1zM341 268h1v3h-1zM351 268h1v3h-1zM361 268h1v3h-1zM371 268h1v3h-1zM381 268h1v3h-1zM391 268h1v3h-1zM401 268h1v3h-1zM411 268h1v3h-1zM421 268h1v3h-1zM431 268h1v3h-1zM441 268h1v3h-1zM451 268h1v3h-1zM461 268h1v3h-1zM471 268h1v3h-1zM481 268h1v3h-1zM491 268h1v3h-1zM501 268h1v3h-1zM511 268h1v3h-1zM521 268h1v3h-1zM531 268h1v3h-1zM541 268h1v3h-1zM551 268h1v3h-1zM561 268h1v3h-1zM571 268h1v3h-1zM581 268h1v3h-1zM591 268h1v3h-1zM601 268h1v3h-1zM611 268h1v3h-1zM621 268h1v3h-1zM631 268h1v3h-1zM641 268h1v3h-1zM651 268h1v3h-1zM661 268h1v3h-1zM671 268h1v3h-1zM681 268h1v3h-1zM691 268h1v3h-1zM701 268h1v3h-1zM711 268h1v3h-1zM721 268h1v3h-1zM731 268h1v3h-1zM741 268h1v3h-1zM751 268h1v3h-1zM761 268h1v3h-1zM771 268h1v3h-1z" fill="#eee9e5"/>
<path d="M31 21h1v2h-1zM31 515h1v2h-1zM41 21h1v2h-1zM41 515h1v2h-1zM51 21h1v5h-1zM51 512h1v5h-1zM61 21h1v2h-1zM61 515h1v2h-1zM71 21h1v2h-1zM71 515h1v2h-1zM81 21h1v2h-1zM81 515h1v2h-1zM91 21h1v2h-1zM91 515h1v2h-1zM101 21h1v5h-1zM101 512h1v5h-1zM111 21h1v2h-1zM111 515h1v2h-1zM121 21h1v2h-1zM121 515h1v2h-1zM131 21h1v2h-1zM131 515h1v2h-1zM141 21h1v2h-1zM141 515h1v2h-1zM151 21h1v5h-1zM151 512h1v5h-1zM161 21h1v2h-1zM161 515h1v2h-1zM171 21h1v2h-1zM171 515h1v2h-1zM181 21h1v2h-1zM181 515h1v2h-1zM191 21h1v2h-1zM191 515h1v2h-1zM201 21h1v5h-1zM201 512h1v5h-1zM211 21h1v2h-1zM211 515h1v2h-1zM221 21h1v2h-1zM221 515h1v2h-1zM231 21h1v2h-1zM231 515h1v2h-1zM241 21h1v2h-1zM241 515h1v2h-1zM251 21h1v5h-1zM251 512h1v5h-1zM261 21h1v2h-1zM261 515h1v2h-1zM271 21h1v2h-1zM271 515h1v2h-1zM281 21h1v2h-1zM281 515h1v2h-1zM291 21h1v2h-1zM291 515h1v2h-1zM301 21h1v5h-1zM301 512h1v5h-1zM311 21h1v2h-1zM311 515h1v2h-1zM321 21h1v2h-1zM321 515h1v2h-1zM331 21h1v2h-1zM331 515h1v2h-1zM341 21h1v2h-1zM341 515h1v2h-1zM351 21h1v5h-1zM351 512h1v5h-1zM361 21h1v2h-1zM361 515h1v2h-1zM371 21h1v2h-1zM371 515h1v2h-1zM381 21h1v2h-1zM381 515h1v2h-1zM391 21h1v2h-1zM391 515h1v2h-1zM401 21h1v5h-1zM401 512h1v5h-1zM411 21h1v2h-1zM411 515h1v2h-1zM421 21h1v2h-1zM421 515h1v2h-1zM431 21h1v2h-1zM431 515h1v2h-1zM441 21h1v2h-1zM441 515h1v2h-1zM451 21h1v5h-1zM451 512h1v5h-1zM461 21h1v2h-1zM461 515h1v2h-1zM471 21h1v2h-1zM471 515h1v2h-1zM481 21h1v2h-1zM481 515h1v2h-1zM491 21h1v2h-1zM491 515h1v2h-1zM501 21h1v5h-1zM501 512h1v5h-1zM511 21h1v2h-1zM511 515h1v2h-1zM521 21h1v2h-1zM521 515h1v2h-1zM531 21h1v2h-1zM531 515h1v2h-1zM541 21h1v2h-1zM541 515h1v2h-1zM551 21h1v5h-1zM551 512h1v5h-1zM561 21h1v2h-1zM561 515h1v2h-1zM571 21h1v2h-1zM571 515h1v2h-1zM581 21h1v2h-1zM581 515h1v2h-1zM591 21h1v2h-1zM591 515h1v2h-1zM601 21h1v5h-1zM601 512h1v5h-1zM611 21h1v2h-1zM611 515h1v2h-1zM621 21h1v2h-1zM621 515h1v2h-1zM631 21h1v2h-1zM631 515h1v2h-1zM641 21h1v2h-1zM641 515h1v2h-1zM651 21h1v5h-1zM651 512h1v5h-1zM661 21h1v2h-1zM661 515h1v2h-1zM671 21h1v2h-1zM671 515h1v2h-1zM681 21h1v2h-1zM681 515h1v2h-1zM691 21h1v2h-1zM691 515h1v2h-1zM701 21h1v5h-1zM701 512h1v5h-1zM711 21h1v2h-1zM711 515h1v2h-1zM721 21h1v2h-1zM721 515h1v2h-1zM731 21h1v2h-1zM731 515h1v2h-1zM741 21h1v2h-1zM741 515h1v2h-1zM751 21h1v5h-1zM751 512h1v5h-1zM761 21h1v2h-1zM761 515h1v2h-1zM771 21h1v2h-1zM771 515h1v2h-1zM22 29h3v1h-3zM775 29h3v1h-3zM22 39h3v1h-3zM775 39h3v1h-3zM22 49h3v1h-3zM775 49h3v1h-3zM22 59h3v1h-3zM775 59h3v1h-3zM22 69h6v1h-6zM771 69h7v1h-7zM22 79h3v1h-3zM775 79h3v1h-3zM22 89h3v1h-3zM775 89h3v1h-3zM22 99h3v1h-3zM775 99h3v1h-3zM22 109h3v1h-3zM775 109h3v1h-3zM22 119h6v1h-6zM771 119h7v1h-7zM22 129h3v1h-3zM775 129h3v1h-3zM22 139h3v1h-3zM775 139h3v1h-3zM22 149h3v1h-3zM775 149h3v1h-3zM22 159h3v1h-3zM775 159h3v1h-3zM22 169h6v1h-6zM771 169h7v1h-7zM22 179h3v1h-3zM775 179h3v1h-3zM22 189h3v1h-3zM775 189h3v1h-3zM22 199h3v1h-3zM775 199h3v1h-3zM22 209h3v1h-3zM775 209h3v1h-3zM22 219h6v1h-6zM771 219h7v1h-7zM22 229h3v1h-3zM775 229h3v1h-3zM22 239h3v1h-3zM775 239h3v1h-3zM22 249h3v1h-3zM775 249h3v1h-3zM22 259h3v1h-3zM775 259h3v1h-3zM22 269h6v1h-6zM771 269h7v1h-7zM22 279h3v1h-3zM775 279h3v1h-3zM22 289h3v1h-3zM775 289h3v1h-3zM22 299h3v1h-3zM775 299h3v1h-3zM22 309h3v1h-3zM775 309h3v1h-3zM22 319h6v1h-6zM771 319h7v1h-7zM22 329h3v1h-3zM775 329h3v1h-3zM22 339h3v1h-3zM775 339h3v1h-3zM22 349h3v1h-3zM775 349h3v1h-3zM22 359h3v1h-3zM775 359h3v1h-3zM22 369h6v1h-6zM771 369h7v1h-7zM22 379h3v1h-3zM775 379h3v1h-3zM22 389h3v1h-3zM775 389h3v1h-3zM22 399h3v1h-3zM775 399h3v1h-3zM22 409h3v1h-3zM775 409h3v1h-3zM22 419h6v1h-6zM771 419h7v1h-7zM22 429h3v1h-3zM775 429h3v1h-3zM22 439h3v1h-3zM775 439h3v1h-3zM22 449h3v1h-3zM775 449h3v1h-3zM22 459h3v1h-3zM775 459h3v1h-3zM22 469h6v1h-6zM771 469h7v1h-7zM22 479h3v1h-3zM775 479h3v1h-3zM22 489h3v1h-3zM775 489h3v1h-3zM22 499h3v1h-3zM775 499h3v1h-3zM22 509h3v1h-3zM775 509h3v1h-3z" fill="#eee9e5"/>
</svg>
<!-- trigger T marker -->
<svg class="a" style="left:394px;top:19px;will-change:transform" width="15" height="17" viewBox="0 0 15 17">
 <path d="M1.3 1.5H13.3V12.5L7.3 15.6L1.3 12.5Z" fill="#000" stroke="#9418e4" stroke-width="1.7"/>
 <text x="0" y="0" transform="translate(7.3 12.5) scale(1.3 1)" text-anchor="middle" font-family="Liberation Sans, sans-serif" font-weight="bold" font-size="10.8" fill="#b428f0">T</text>
</svg>
<!-- trigger level arrow -->
<svg class="a" style="left:780px;top:166px" width="15" height="15" viewBox="0 0 15 15">
 <path d="M0 7.5L14 1.2V13.8Z" fill="#a020e0"/>
</svg>
<!-- channel 1 marker -->
<svg class="a" style="left:0;top:260px;will-change:transform" width="20" height="20" viewBox="0 0 20 20">
 <path d="M-1 1.7H15L18.6 10L15 18.2H-1Z" fill="#000" stroke="#e60000" stroke-width="1.4"/>
 <text x="8.2" y="15.4" text-anchor="middle" font-family="NanumGothic, Liberation Sans, sans-serif" font-weight="bold" font-size="14.5" fill="#e60000">1</text>
</svg>

<!-- frequency box -->
<div class="a" style="left:646px;top:499px;width:127px;height:19px;box-sizing:border-box;border:2px solid #63a7a7;border-radius:5px;background:#000"></div>
<div class="dot" style="left:649.5px;top:500.6px;width:15.5px;height:15.5px;line-height:17.5px;background:#e00000"><b>1</b></div>
<div class="t wht" style="left:667.2px;top:501.5px">50.0715Hz</div>

<!-- bottom area -->
<div class="a" style="left:0;top:519px;width:319px;height:81px;background:#63a7a7"></div>
<div class="a" style="left:319px;top:519px;width:100px;height:1px;background:#63a7a7"></div>
<div class="a" style="left:665px;top:519px;width:129px;height:1px;background:#63a7a7"></div>
<div class="a" style="left:2px;top:519.5px;width:207px;height:78.5px;background:#0080e0"></div>
<div class="a" style="left:211px;top:519.5px;width:106px;height:39.5px;background:#0080e0"></div>
<div class="a" style="left:2px;top:561px;width:315px;height:37px;background:#0080e0"></div>
<div class="a" style="left:2px;top:539px;width:207px;height:1px;background:#0a5a8c"></div>
<div class="a" style="left:2px;top:559px;width:315px;height:2px;background:#63a7a7"></div>
<div class="blk" style="left:1px;top:519px;width:208px;height:20px;border-radius:4px 5px 5px 4px"></div>
<div class="blk" style="left:1px;top:540px;width:208px;height:19px;border-radius:4px 5px 5px 4px"></div>
<div class="blk" style="left:211px;top:519px;width:106px;height:40px;border-radius:5px"></div>
<div class="blk" style="left:1px;top:561px;width:316px;height:18px;border-radius:4px 5px 5px 4px"></div>

<div class="a" style="left:0;top:519px;width:318px;height:1px;background:rgba(104,174,174,0.38)"></div>
<div class="dot" style="left:2.25px;top:522.25px;background:#e00000"><b>1</b></div>
<div class="t red" style="left:17.6px;top:524px">2V-</div>
<div class="t red" style="left:105.9px;top:524px">0.00div</div>
<div class="dot" style="left:2.5px;top:542px;width:15.5px;height:15.5px;line-height:19px;background:#e6e600"><b class="two">2</b></div>
<div class="t yel" style="left:17.8px;top:543px">50.0mV-</div>
<div class="t yel" style="left:105.9px;top:543px">0.00div</div>
<div class="t red" style="left:229px;top:522.5px">(5KS/s)</div>
<div class="t red" style="left:222.75px;top:542.2px">Depth:1K</div>
<div class="dot" style="left:2px;top:561.5px;width:15.4px;height:15.4px;line-height:17.4px;background:#e00000"><b>1</b></div>
<div class="t red" style="left:21px;top:563px">Vp:6.080v</div>

<!-- menu -->
<div class="a" style="left:319px;top:538px;width:480px;height:60px;background:#0060a8"></div>
<div class="blk" style="left:319px;top:519.4px;width:99.4px;height:18.2px;border-radius:7px/9px"></div>
<div class="t wht" style="left:337px;top:522.5px">M:10ms</div>
<div class="blk" style="left:665px;top:519.6px;width:129px;height:18.1px;border-radius:7px/9px"></div>
<div class="dot" style="left:667.2px;top:520.8px;width:15.6px;height:15.6px;line-height:17.6px;background:#e00000"><b>1</b></div>
<svg class="a" style="left:684px;top:520px" width="24" height="18" viewBox="684 520 24 18">
 <path d="M685 535.5H693.6L697.6 522.5H705" fill="none" stroke="#f0f0f0" stroke-width="1"/>
</svg>
<div class="t wht" style="left:706.6px;top:523px">3.84V</div>

<div class="nav" style="left:321px;top:542px"></div><div class="btn" style="left:323px;top:541px"></div>
<div class="t" style="left:346px;top:550.5px;color:#000">Type</div>
<div class="a" style="left:341px;top:571px;width:50px;height:20px;background:#e2e2e2"></div>
<div class="t" style="left:342px;top:574.2px;color:#000">Image</div>
<div class="nav" style="left:596px;top:542px"></div><div class="btn" style="left:598px;top:541px"></div>
<div class="t" style="left:620.9px;top:561.5px;color:#000">Save</div>
</body></html>
